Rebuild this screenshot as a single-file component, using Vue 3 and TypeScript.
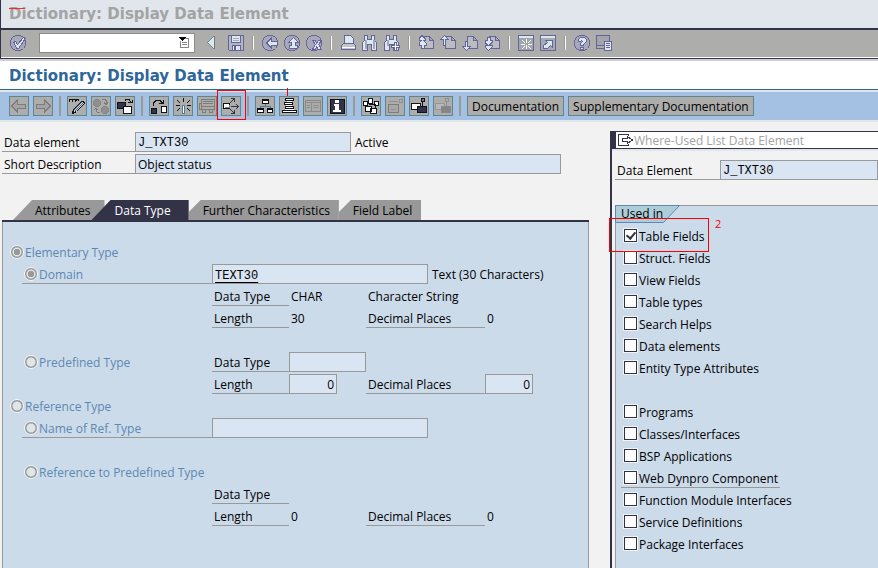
<script setup lang="ts">
import { h, ref } from 'vue'

interface Shape {
  d: string
  f?: string
  s?: string
  w?: number
}

const P = '#64649c'
const L = '#dbe8ee'
const K = '#111118'
const N = '#33334a'
const G = '#7c7c7c'
const W = '#ffffff'
const C = '#a8a8ba'

const disc: Shape = { d: 'M5.500 .5h5l3 2 2 3v5l-2 3-3 2h-5l-3-2-2-3v-5l2-3z', f: C, s: P }
const sheet: Shape = { d: 'M5.500 1.500h6l4 4v8h-10zM11.500 1.500v4h4', f: '#bcbcc2', s: P }

const shapes: Record<string, Shape[]> = {
  check: [disc, { d: 'M3.500 7.500l2-1 2 3 6-7 2 1-7 10H7z', f: L, s: P }],
  prev: [{ d: 'M8 1v13L1 7.500z', f: L }, { d: 'M8 1L1.500 7.500 8 14', s: '#5e8b98' }, { d: 'M8.500 1v13', s: '#777' }],
  save: [
    { d: 'M.5 .5h15v15h-14l-1-1z', f: '#b5b5c0', s: P },
    { d: 'M3.500 .5h9v7h-9z', f: L, s: P },
    { d: 'M5 3.500h6M5 5.500h6', s: C },
    { d: 'M4.500 15v-5h8v5', f: L, s: P },
    { d: 'M7 11v4', s: P, w: 2 }
  ],
  back: [disc, { d: 'M4.500 8l5-5v3h6v4h-6v3z', f: L, s: P }],
  up: [disc, { d: 'M9.500 2.500l5 5h-3v3h2v3h-8v-3h2v-3h-3z', f: L, s: P }],
  cancel: [disc, { d: 'M6.500 5.500h3l1 3 2-3h3l-3 4 3 5h-3l-2-3-1 3h-3l3-5z', f: L, s: P }],
  print: [
    { d: 'M4.500 8.500v-8h6l3 3v5', f: L, s: P },
    { d: 'M1.500 10.500l2-2h10l2 2v4h-14z', f: '#c4c4cb', s: P },
    { d: 'M2 12.500h13', s: W }
  ],
  find: [
    { d: 'M2.500 .5h3v4h4v-4h3v5l2 2v8h-5v-6h-4v6h-5v-8l2-2z', f: L, s: P },
    { d: 'M3.500 5v9M11.500 5v9', s: C, w: 2 }
  ],
  findNext: [
    { d: 'M2.500 .5h3v4h4v-4h3v5l2 2v8h-5v-6h-4v6h-5v-8l2-2z', f: L, s: P },
    { d: 'M3.500 5v6', s: C, w: 2 },
    { d: 'M10.500 7.500h2v3h3v2h-3v3h-2v-3h-3v-2h3z', f: W, s: P }
  ],
  first: [sheet, { d: 'M4 .5l3 3v2H5.500L8 8v2H6v3H3v-3H1V8l2.500-2.500H1v-2z', f: L, s: P }],
  pageUp: [sheet, { d: 'M.5 4.500l4-4 4 4h-3v6h-2v-6z', f: L, s: P }],
  pageDown: [sheet, { d: 'M3.500 6.500h2v5h3l-4 4-4-4h3z', f: L, s: P }],
  last: [sheet, { d: 'M3 2.500h3v3h2v2L5.500 10H8v2l-3.500 3.500L1 12v-2h2.500L1 7.500v-2h2z', f: L, s: P }],
  session: [
    { d: 'M.5 .5h15v15H.5z', f: '#9fa6ac', s: P },
    { d: 'M1 2h14', s: L, w: 2 },
    { d: 'M8.500 4v4M8.500 10v4M3 9.500h4M10 9.500h4M4 5l3 3M13 5l-3 3M4 14l3-3M13 14l-3-3', s: W }
  ],
  shortcut: [
    { d: 'M.5 .5h15v15H.5z', f: '#a6abb2', s: P },
    { d: 'M1 2h14', s: L, w: 2 },
    { d: 'M3.500 13.500v-3l4-3-2-2h7v7l-2-2-3 3z', f: L, s: P }
  ],
  help: [
    disc,
    { d: 'M6.500 2.500h4l2 2v2l-3 3v1h-3v-2l2-2-1-1-1 1h-2v-2z', f: L, s: P },
    { d: 'M6.500 12.500h3v2h-3z', f: L, s: P }
  ],
  layout: [
    { d: 'M.5 .5h13v10H.5z', f: '#a4a4ac', s: P },
    { d: 'M.5 10.500v3h10', s: P },
    { d: 'M8.500 6.500h7v9h-7z', f: L, s: P },
    { d: 'M10 8.500h4M10 10.500h4M10 12.500h4', s: P }
  ],
  left: [{ d: 'M.5 8l6-6v4h8v4h-8v4z', f: '#a4a4a4', s: G }],
  right: [{ d: 'M15.500 8l-6-6v4h-8v4h8v4z', f: '#a4a4a4', s: G }],
  edit: [
    { d: 'M.5 4c0-4 3-4 3 0 0-4 3-4 3 0 1-4 3-3 3-1', s: K },
    { d: 'M4.500 11.500l8-8 2 0 1 2-8 8-4 2z', f: '#c9d3df', s: K },
    { d: 'M6 13l8-8M5 12l8-8', s: '#5a6a8a' }
  ],
  toggle: [
    { d: 'M2.500 1.500h3l2 2v3l-2 2h-3l-2-2v-3zM10.500 8.500h3l2 2v3l-2 2h-3l-2-2v-3z', f: '#8f8f8f', s: '#858585' },
    { d: 'M9 1.500h3l1 1v3M11 4.500l2 2 2-2M3 10v3l1 1h3M1 12l2-2 2 2', s: G }
  ],
  other: [
    { d: 'M.5 4.500h8v6h-8z', f: N, s: K },
    { d: 'M6.500 8.500h8v7h-8z', f: W, s: K },
    { d: 'M8 2.500l1-1h3l2 3M11 4.500h4v-3', s: K }
  ],
  activate: [
    { d: 'M.5 10.500h5v5h-5z', f: N, s: K },
    { d: 'M10.500 8.500h5v6h-5z', f: W, s: K },
    { d: 'M2.500 8V5l3-3h3l3 3M8 5.500h4v-4', s: K }
  ],
  wand: [
    { d: 'M8.500 0v4M2 2l3 3M15 2l-3 3M1 7.500h4M12 7.500h4M2 13l3-3M15 13l-3-3', s: K },
    { d: 'M8.500 7v9', s: '#4d7d9a', w: 3 },
    { d: 'M8.500 8v7', s: W }
  ],
  lorry: [
    { d: 'M2.500 1.500h13v10h-13zM2 5.500H.5v6h2M4 3.500h10M4 5.500h10M3 8.500h12M3.500 12v2h3v-2M10.500 12v2h3v-2', s: G }
  ],
  whereUsed: [
    { d: 'M.5 5.500h6v5h-6z', f: W, s: K },
    { d: 'M2 9.500h4V7', s: '#888' },
    { d: 'M8 8.500h8', s: N },
    { d: 'M13 6h1v1h1v1h1v1h-1v1h-1v1h-1v-1h1V9h1V8h-1V7h-1z', f: N },
    { d: 'M7 4h1V3h1V2h1V1H8V0h4v4h-1V2h-1v1H9v1H8v1H7zM7 12h1v1h1v1h1v1H8v1h4v-4h-1v2h-1v-1H9v-1H8v-1H7z', f: N }
  ],
  hierarchy: [
    { d: 'M8 6v2M3 11V8.500h10V11', s: '#55798e' },
    { d: 'M5.500 1.500h6v4h-6zM.5 10.500h6v4h-6zM10.500 10.500h5v4h-5z', f: W, s: K },
    { d: 'M5 2h7M0 11h7M10 11h6', s: K, w: 2 }
  ],
  stack: [
    { d: 'M4.500 .5h8v2h-8zM3.500 4.500h8v2h-8zM4.500 8.500h8v2h-8zM1.500 12.500h14v2h-14z', f: W, s: K },
    { d: 'M6 3.500h5M5 7.500h6M4 11.500h9', s: W }
  ],
  list: [
    { d: 'M.5 2.500h15v11H.5z', f: '#ababab', s: '#8a8a8a' },
    { d: 'M1 4.500h14M6.500 5v8M2 7.500h3M2 9.500h3M8 7.500h6M8 9.500h6', s: '#8e8e8e' }
  ],
  info: [
    { d: 'M1 1h14v14H1z', f: N, s: K },
    { d: 'M6 2h4v3H6zM5 6h5v6h2v2H4v-2h2V8H5z', f: W }
  ],
  spread: [
    { d: 'M5.500 .5h4v5h-4zM.5 3.500h4v4h-4zM11.500 3.500h4v4h-4z', f: W, s: K },
    { d: 'M2.500 8.500h6v5h-6zM7.500 10.500h6v5h-6z', f: W, s: K },
    { d: 'M6 6.500h6v4', s: K }
  ],
  frame: [
    { d: 'M1.500 6.500h10v8h-10z', f: '#a8a8a8', s: G },
    { d: 'M12.500 1.500h3v3h-3zM4 11.500h5M2 3.500h9', s: '#909090' }
  ],
  windowOn: [
    { d: 'M.5 5.500h9v6h-9z', f: W, s: K },
    { d: 'M6.500 8.500h9v6h-9z', f: N, s: K },
    { d: 'M10.500 .5h3v3h-3z', f: '#777', s: K },
    { d: 'M11.500 4v4', s: K }
  ],
  windowOff: [
    { d: 'M.5 5.500h9v6h-9z', f: '#b8b8b8', s: '#969696' },
    { d: 'M6.500 8.500h9v6h-9z', f: '#858585', s: '#888' },
    { d: 'M10.500 .5h3v3h-3zM11.500 4v4', s: '#909090' }
  ],
  exit: [
    { d: 'M11.500 4V2.500H1.500v11h10V12', s: N },
    { d: 'M5.500 6.500h5v-2l5 3.500-5 3.500v-2h-5z', f: W, s: N }
  ],
  menu: [
    { d: 'M1 2h7L4.500 6z', f: '#000' },
    { d: 'M7 3.500h3v9H2.500V6', s: '#888' },
    { d: 'M4 7.500h5M4 9.500h5', s: '#888' }
  ]
}

const Icon = (props: { name: string }) =>
  h(
    'svg',
    { width: 16, height: 16, viewBox: '0 0 16 16', 'shape-rendering': 'crispEdges', 'aria-hidden': 'true' },
    (shapes[props.name] ?? []).map((p) =>
      h('path', { d: p.d, fill: p.f ?? 'none', stroke: p.s ?? 'none', 'stroke-width': p.w ?? 1 })
    )
  )
Icon.props = ['name']

const systemGroups = [
  ['back', 'up', 'cancel'],
  ['print', 'find', 'findNext'],
  ['first', 'pageUp', 'pageDown', 'last'],
  ['session', 'shortcut'],
  ['help', 'layout']
]

const appGroups = [
  ['left', 'right'],
  ['edit', 'toggle', 'other'],
  ['activate', 'wand', 'lorry', 'whereUsed'],
  ['hierarchy', 'stack', 'list', 'info'],
  ['spread', 'frame', 'windowOn', 'windowOff']
]

const tabs = ['Attributes', 'Data Type', 'Further Characteristics', 'Field Label']
const activeTab = ref('Data Type')
const kind = ref('elementary')
const source = ref('domain')
const command = ref('')

const usageGroups = [
  ['Table Fields', 'Struct. Fields', 'View Fields', 'Table types', 'Search Helps', 'Data elements', 'Entity Type Attributes'],
  ['Programs', 'Classes/Interfaces', 'BSP Applications', 'Web Dynpro Component', 'Function Module Interfaces', 'Service Definitions', 'Package Interfaces']
]
const selected = ref<string[]>(['Table Fields'])
</script>

<template>
  <div class="screen">
    <header class="system">
      <div class="ghost-title">Dictionary: Display Data Element<i class="scribble"></i></div>
      <div class="system-bar">
        <button class="flat" aria-label="Enter"><Icon name="check" /></button>
        <div class="command">
          <input v-model="command" type="text" aria-label="Command" />
          <button class="flat" aria-label="History"><Icon name="menu" /></button>
        </div>
        <button class="flat" aria-label="Collapse"><Icon name="prev" /></button>
        <button class="flat" aria-label="Save"><Icon name="save" /></button>
        <template v-for="(group, i) in systemGroups" :key="i">
          <span class="sep"></span>
          <button v-for="name in group" :key="name" class="flat" :aria-label="name"><Icon :name="name" /></button>
        </template>
      </div>
    </header>

    <h1 class="title">Dictionary: Display Data Element</h1>

    <nav class="app-bar">
      <template v-for="(group, i) in appGroups" :key="i">
        <button v-for="name in group" :key="name" class="tool" :class="name" :aria-label="name"><Icon :name="name" /></button>
        <span class="sep"></span>
      </template>
      <button class="tool text">Documentation</button>
      <button class="tool text">Supplementary Documentation</button>
    </nav>

    <div class="work">
      <main class="main">
        <div class="head-row">
          <label class="cap" for="element">Data element</label>
          <input id="element" class="field mono medium" value="J_TXT30" readonly />
          <span class="after">Active</span>
        </div>
        <div class="head-row">
          <label class="cap" for="short">Short Description</label>
          <input id="short" class="field long" value="Object status" readonly />
        </div>

        <div class="tabs" role="tablist">
          <button
            v-for="tab in tabs"
            :key="tab"
            class="tab"
            :class="{ active: tab === activeTab }"
            role="tab"
            :aria-selected="tab === activeTab"
            @click="activeTab = tab"
          >{{ tab }}</button>
        </div>

        <section class="panel">
          <div class="row">
            <label class="choice"><input v-model="kind" type="radio" name="kind" value="elementary" /><span>Elementary Type</span></label>
          </div>
          <div class="row">
            <label class="choice sub lined"><input v-model="source" type="radio" name="source" value="domain" /><span>Domain</span></label>
            <div class="wide">
              <div class="field medium"><a class="mono" href="#domain">TEXT30</a></div>
              <span class="after">Text (30 Characters)</span>
            </div>
          </div>
          <div class="row">
            <span></span><span class="cap">Data Type</span><span class="val">CHAR</span><span class="val">Character String</span>
          </div>
          <div class="row">
            <span></span><span class="cap">Length</span><span class="val">30</span><span class="cap">Decimal Places</span><span class="val">0</span>
          </div>
          <div class="row"></div>
          <div class="row">
            <label class="choice sub"><input v-model="source" type="radio" name="source" value="predefined" /><span>Predefined Type</span></label>
            <label class="cap" for="ptype">Data Type</label>
            <input id="ptype" class="field" readonly />
          </div>
          <div class="row">
            <span></span>
            <label class="cap" for="plen">Length</label>
            <input id="plen" class="field num" value="0" readonly />
            <label class="cap" for="pdec">Decimal Places</label>
            <input id="pdec" class="field num" value="0" readonly />
          </div>
          <div class="row">
            <label class="choice"><input v-model="kind" type="radio" name="kind" value="reference" /><span>Reference Type</span></label>
          </div>
          <div class="row">
            <label class="choice sub lined"><input v-model="source" type="radio" name="source" value="refname" /><span>Name of Ref. Type</span></label>
            <div class="wide"><input class="field medium" aria-label="Name of reference type" readonly /></div>
          </div>
          <div class="row"></div>
          <div class="row">
            <label class="choice sub"><input v-model="source" type="radio" name="source" value="refpre" /><span>Reference to Predefined Type</span></label>
          </div>
          <div class="row"><span></span><span class="cap">Data Type</span></div>
          <div class="row">
            <span></span><span class="cap">Length</span><span class="val">0</span><span class="cap">Decimal Places</span><span class="val">0</span>
          </div>
        </section>
      </main>

      <aside class="dialog">
        <h2 class="dialog-title"><Icon name="exit" /><span>Where-Used List Data Element</span></h2>
        <div class="dialog-row">
          <label class="cap" for="used">Data Element</label>
          <input id="used" class="field mono" value="J_TXT30" readonly />
        </div>
        <section class="usage">
          <h3 class="usage-title">
            <svg class="usage-shape" width="66" height="19" viewBox="0 0 66 19" aria-hidden="true">
              <path d="M.5 .5h64L48.500 17.500H.5z" fill="#adcdd9" stroke="#5c8ab5" />
            </svg>
            <span>Used in</span>
          </h3>
          <div v-for="(group, i) in usageGroups" :key="i" class="checks">
            <label v-for="item in group" :key="item" class="check" :class="{ ruled: item === 'Web Dynpro Component' }">
              <input v-model="selected" type="checkbox" :value="item" /><span>{{ item }}</span>
            </label>
          </div>
          <span class="mark-box"></span>
          <span class="mark-number">2</span>
        </section>
      </aside>
    </div>
  </div>
</template>

<style>
html,
body,
#app {
  height: 100%;
}
body {
  margin: 0;
  overflow: hidden;
}
</style>

<style scoped>
.screen {
  display: flex;
  flex-direction: column;
  min-height: 100%;
  background: #f2f2f2;
  color: #000;
  font-family: "Open Sans", "Noto Sans", sans-serif;
  font-size: 12px;
  line-height: 20px;
}
.screen * {
  box-sizing: border-box;
}
button,
input {
  margin: 0;
  padding: 0;
  border: 0;
  border-radius: 0;
  font: inherit;
  color: inherit;
}
svg {
  display: block;
  flex: none;
}
.system {
  border-left: 1px solid #333348;
  border-bottom: 1px solid #333348;
}
.ghost-title,
.title {
  font-family: "DejaVu Sans", sans-serif;
  font-size: 15px;
  font-weight: bold;
  line-height: 28px;
}
.ghost-title {
  position: relative;
  height: 30px;
  padding-left: 8px;
  border-bottom: 2px solid #333348;
  background: #e0e6ec;
  color: #a3a3a3;
}
.scribble {
  position: absolute;
  left: 8px;
  top: 8px;
  width: 16px;
  height: 1px;
  background: #f03020;
}
.system-bar {
  display: flex;
  align-items: center;
  gap: 6px;
  height: 28px;
  padding: 0 0 1px 9px;
  border-bottom: 1px solid #fff;
  background: #adadac;
}
.flat {
  flex: none;
  width: 16px;
  height: 16px;
  background: none;
}
.command {
  display: flex;
  align-items: center;
  width: 156px;
  height: 20px;
  margin: 0 5px 0 7px;
  border: 1px solid #8c8c8c;
  background: #fff;
}
.command input {
  flex: 1;
  min-width: 0;
  background: none;
  outline: 0;
}
.sep {
  flex: none;
  width: 6px;
  height: 14px;
  background: linear-gradient(90deg, transparent 2px, #999 2px, #999 3px, #fff 3px, #fff 4px, transparent 4px);
}
.title {
  height: 31px;
  margin: 0;
  padding-left: 9px;
  border-top: 2px solid #d0d0d4;
  border-bottom: 1px solid #2e6699;
  background: #fff;
  color: #2e6699;
  line-height: 30px;
}
.app-bar {
  display: flex;
  align-items: center;
  gap: 4px;
  height: 32px;
  padding: 0 9px;
  border-top: 2px solid #e0e6ea;
  border-bottom: 2px solid #e0e6ea;
  background: #a4c1e4;
}
.app-bar .sep {
  height: 20px;
  background: linear-gradient(90deg, transparent 2px, #999 2px, #999 4px, transparent 4px);
}
.tool {
  position: relative;
  display: grid;
  place-items: center;
  flex: none;
  width: 20px;
  height: 20px;
  border: 1px solid #5f8590;
  background: #adadac;
}
.tool.text {
  width: auto;
  padding: 1px 4px 0;
  line-height: 17px;
}
.whereUsed::after {
  content: "";
  position: absolute;
  inset: -7px -6px -5px -5px;
  border: 1px solid #f00;
}
.stack::after {
  content: "";
  position: absolute;
  left: 7px;
  top: -9px;
  width: 1px;
  height: 8px;
  background: #f00;
}
.work {
  flex: 1;
  display: grid;
  grid-template-columns: minmax(0, 1fr) 268px;
  gap: 21px;
  padding-left: 2px;
}
.main {
  display: flex;
  flex-direction: column;
  padding-top: 10px;
}
.head-row {
  display: flex;
  height: 22px;
}
.head-row .cap {
  width: 133px;
}
.cap {
  height: 20px;
  padding-left: 2px;
  border-bottom: 1px solid #999;
  line-height: 22px;
  white-space: nowrap;
}
.field {
  width: 100%;
  min-width: 0;
  height: 20px;
  padding: 1px 2px 0;
  border: 1px solid #999;
  background: #d9e5f3;
  line-height: 17px;
  outline: 0;
}
.medium {
  width: 216px;
}
.long {
  width: 426px;
}
.num {
  width: 48px;
  text-align: right;
}
.mono {
  font-family: "Liberation Mono", monospace;
}
.after {
  padding-left: 4px;
  line-height: 22px;
  white-space: nowrap;
}
.tabs {
  display: flex;
  height: 46px;
  padding: 24px 0 0 11px;
  border-bottom: 2px solid #333348;
}
.tab {
  height: 20px;
  padding: 1px 9px 0 14px;
  background: #999;
  clip-path: polygon(12px 0, 100% 0, 100% 100%, 0 100%, 0 12px);
  white-space: nowrap;
}
.tab:first-child {
  padding: 1px 14px 0 22px;
  clip-path: polygon(19px 0, 100% 0, 100% 100%, 0 100%);
}
.tab.active {
  margin-left: -13px;
  padding: 1px 18px 0 23px;
  background: #333348;
  color: #fff;
  clip-path: polygon(19px 0, 100% 0, 100% 100%, 0 100%);
}
.panel {
  flex: 1;
  padding-top: 20px;
  border: 1px solid #999;
  border-width: 0 1px;
  background: #ccdbe9;
}
.row {
  display: grid;
  grid-template-columns: 209px 77px 77px 119px 1fr;
  height: 22px;
}
.wide {
  grid-column: 2 / -1;
  display: flex;
}
.field a {
  color: inherit;
  text-underline-offset: 3px;
}
.val {
  padding-left: 2px;
  line-height: 22px;
  white-space: nowrap;
}
.choice {
  display: flex;
  align-items: center;
  gap: 1px;
  height: 20px;
  padding-left: 7px;
  color: #5c88b3;
  white-space: nowrap;
}
.choice span,
.check span {
  padding-top: 2px;
}
.sub {
  margin-left: 19px;
  padding-left: 2px;
}
.lined {
  border-bottom: 1px solid #999;
}
.choice input {
  appearance: none;
  width: 14px;
  height: 14px;
  border: 1px solid #f4f6f8;
  border-radius: 50%;
  background: radial-gradient(circle, #dfe6ea 4px, #999 5px, #999 6px);
}
.choice input:checked {
  background: radial-gradient(circle, #999 3px, #dfe6ea 3px, #dfe6ea 4px, #999 5px, #999 6px);
}
.dialog {
  margin-top: 9px;
  border-left: 2px solid #333348;
}
.dialog-title {
  display: flex;
  align-items: center;
  gap: 1px;
  height: 18px;
  margin: 0;
  border: solid #333348;
  border-width: 1px 0 1px 4px;
  background: #fff;
  color: #a3a3a3;
  font-size: 12px;
  font-weight: normal;
  line-height: 16px;
  white-space: nowrap;
}
.dialog-title svg {
  margin-left: 1px;
}
.dialog-title span {
  padding-top: 2px;
}
.dialog-row {
  display: flex;
  padding: 9px 0 25px 3px;
  border-top: 2px solid #e0e6ea;
}
.dialog-row .cap {
  flex: none;
  width: 105px;
}
.usage {
  position: relative;
  height: calc(100% - 74px);
  margin-left: 3px;
  border: 1px solid #999;
  border-width: 1px 0 0 1px;
  background: #ccdbe9;
}
.usage-title {
  height: 20px;
  margin: -1px 0 1px -1px;
  font-size: 12px;
  font-weight: normal;
  line-height: 18px;
}
.usage-title span {
  position: relative;
  padding-left: 6px;
}
.usage-shape {
  position: absolute;
  left: -1px;
  top: -1px;
}
.checks {
  padding-bottom: 22px;
}
.check {
  display: flex;
  align-items: center;
  gap: 2px;
  width: max-content;
  height: 20px;
  margin: 0 0 2px 5px;
  padding: 0 2px 0 3px;
  border-bottom: 1px solid transparent;
  white-space: nowrap;
}
.check.ruled {
  border-color: #999;
}
.check input {
  appearance: none;
  display: grid;
  place-items: center;
  width: 13px;
  height: 13px;
  border: 1px solid #333348;
  background: #fff;
  outline: 1px solid #f2f2f2;
}
.check input:checked::after {
  content: "";
  width: 4px;
  height: 7px;
  margin-top: -2px;
  border: solid #333348;
  border-width: 0 2px 2px 0;
  transform: rotate(40deg);
}
.mark-box {
  position: absolute;
  left: -7px;
  top: 12px;
  width: 100px;
  height: 34px;
  border: 1px solid #f00;
  pointer-events: none;
}
.mark-number {
  position: absolute;
  left: 99px;
  top: 8px;
  color: #f00;
  font-size: 11px;
}
</style>
